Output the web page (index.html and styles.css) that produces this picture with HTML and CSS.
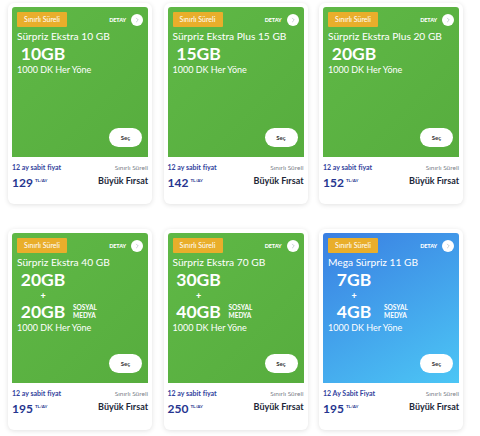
FILE: index.html
```html
<!DOCTYPE html>
<html lang="tr">
<head>
  <meta charset="UTF-8" />
  <title>Paketler</title>
  <link rel="stylesheet" href="styles.css">
</head>
<body>

  <div class="packages">

    <!-- Sürpriz Ekstra 10 GB -->
    <div class="card">
      <div class="pack green">
        <div class="pack-top">
          <span class="badge">Sınırlı Süreli</span>
          <span class="detail">DETAY <span class="detail-dot"><svg viewBox="0 0 12 12"><path d="M5 3.5 L7.5 6 L5 8.5" /></svg></span></span>
        </div>
        <div class="name">Sürpriz Ekstra 10 GB</div>
        <div class="amount">10GB</div>
        <div class="minutes">1000 DK Her Yöne</div>
        <div class="select"><button class="btn-sec">Seç</button></div>
      </div>
      <div class="info">
        <div>
          <div class="fixed">12 ay sabit fiyat</div>
          <div class="price">129<span class="unit">TL/AY</span></div>
        </div>
        <div class="info-right">
          <div class="limited">Sınırlı Süreli</div>
          <div class="deal">Büyük Fırsat</div>
        </div>
      </div>
    </div>

    <!-- Sürpriz Ekstra Plus 15 GB -->
    <div class="card">
      <div class="pack green">
        <div class="pack-top">
          <span class="badge">Sınırlı Süreli</span>
          <span class="detail">DETAY <span class="detail-dot"><svg viewBox="0 0 12 12"><path d="M5 3.5 L7.5 6 L5 8.5" /></svg></span></span>
        </div>
        <div class="name">Sürpriz Ekstra Plus 15 GB</div>
        <div class="amount">15GB</div>
        <div class="minutes">1000 DK Her Yöne</div>
        <div class="select"><button class="btn-sec">Seç</button></div>
      </div>
      <div class="info">
        <div>
          <div class="fixed">12 ay sabit fiyat</div>
          <div class="price">142<span class="unit">TL/AY</span></div>
        </div>
        <div class="info-right">
          <div class="limited">Sınırlı Süreli</div>
          <div class="deal">Büyük Fırsat</div>
        </div>
      </div>
    </div>

    <!-- Sürpriz Ekstra Plus 20 GB -->
    <div class="card">
      <div class="pack green">
        <div class="pack-top">
          <span class="badge">Sınırlı Süreli</span>
          <span class="detail">DETAY <span class="detail-dot"><svg viewBox="0 0 12 12"><path d="M5 3.5 L7.5 6 L5 8.5" /></svg></span></span>
        </div>
        <div class="name">Sürpriz Ekstra Plus 20 GB</div>
        <div class="amount">20GB</div>
        <div class="minutes">1000 DK Her Yöne</div>
        <div class="select"><button class="btn-sec">Seç</button></div>
      </div>
      <div class="info">
        <div>
          <div class="fixed">12 ay sabit fiyat</div>
          <div class="price">152<span class="unit">TL/AY</span></div>
        </div>
        <div class="info-right">
          <div class="limited">Sınırlı Süreli</div>
          <div class="deal">Büyük Fırsat</div>
        </div>
      </div>
    </div>

    <!-- Sürpriz Ekstra 40 GB -->
    <div class="card">
      <div class="pack green">
        <div class="pack-top">
          <span class="badge">Sınırlı Süreli</span>
          <span class="detail">DETAY <span class="detail-dot"><svg viewBox="0 0 12 12"><path d="M5 3.5 L7.5 6 L5 8.5" /></svg></span></span>
        </div>
        <div class="name">Sürpriz Ekstra 40 GB</div>
        <div class="amount">20GB</div>
        <div class="plus">+</div>
        <div class="extra">
          <span class="amount">20GB</span>
          <span class="social">SOSYAL<br>MEDYA</span>
        </div>
        <div class="minutes">1000 DK Her Yöne</div>
        <div class="select"><button class="btn-sec">Seç</button></div>
      </div>
      <div class="info">
        <div>
          <div class="fixed">12 ay sabit fiyat</div>
          <div class="price">195<span class="unit">TL/AY</span></div>
        </div>
        <div class="info-right">
          <div class="limited">Sınırlı Süreli</div>
          <div class="deal">Büyük Fırsat</div>
        </div>
      </div>
    </div>

    <!-- Sürpriz Ekstra 70 GB -->
    <div class="card">
      <div class="pack green">
        <div class="pack-top">
          <span class="badge">Sınırlı Süreli</span>
          <span class="detail">DETAY <span class="detail-dot"><svg viewBox="0 0 12 12"><path d="M5 3.5 L7.5 6 L5 8.5" /></svg></span></span>
        </div>
        <div class="name">Sürpriz Ekstra 70 GB</div>
        <div class="amount">30GB</div>
        <div class="plus">+</div>
        <div class="extra">
          <span class="amount">40GB</span>
          <span class="social">SOSYAL<br>MEDYA</span>
        </div>
        <div class="minutes">1000 DK Her Yöne</div>
        <div class="select"><button class="btn-sec">Seç</button></div>
      </div>
      <div class="info">
        <div>
          <div class="fixed">12 ay sabit fiyat</div>
          <div class="price">250<span class="unit">TL/AY</span></div>
        </div>
        <div class="info-right">
          <div class="limited">Sınırlı Süreli</div>
          <div class="deal">Büyük Fırsat</div>
        </div>
      </div>
    </div>

    <!-- Mega Sürpriz 11 GB -->
    <div class="card">
      <div class="pack blue">
        <div class="pack-top">
          <span class="badge">Sınırlı Süreli</span>
          <span class="detail">DETAY <span class="detail-dot"><svg viewBox="0 0 12 12"><path d="M5 3.5 L7.5 6 L5 8.5" /></svg></span></span>
        </div>
        <div class="name">Mega Sürpriz 11 GB</div>
        <div class="amount">7GB</div>
        <div class="plus">+</div>
        <div class="extra">
          <span class="amount">4GB</span>
          <span class="social">SOSYAL<br>MEDYA</span>
        </div>
        <div class="minutes">1000 DK Her Yöne</div>
        <div class="select"><button class="btn-sec">Seç</button></div>
      </div>
      <div class="info">
        <div>
          <div class="fixed">12 Ay Sabit Fiyat</div>
          <div class="price">195<span class="unit">TL/AY</span></div>
        </div>
        <div class="info-right">
          <div class="limited">Sınırlı Süreli</div>
          <div class="deal">Büyük Fırsat</div>
        </div>
      </div>
    </div>

  </div>

</body>
</html>
```

FILE: styles.css
```css
    * {
      box-sizing: border-box;
      margin: 0;
      padding: 0;
    }

    body {
      background: #ffffff;
      font-family: 'Lato', 'Noto Sans', sans-serif;
      width: 480px;
      height: 436px;
      overflow: hidden;
    }

    .packages {
      display: grid;
      grid-template-columns: repeat(3, 144px);
      column-gap: 11.5px;
      row-gap: 25px;
      padding: 3px 0 0 8px;
    }

    .card {
      background: #fff;
      border-radius: 6px;
      box-shadow: 0 1px 5px rgba(0, 0, 0, 0.12);
      height: 201px;
      padding: 4px;
    }

    .pack {
      position: relative;
      display: flex;
      flex-direction: column;
      height: 150px;
      padding: 5px 5px 10px 5px;
      border-radius: 3px 3px 0 0;
      color: #fff;
    }

    .green {
      background: linear-gradient(135deg, #5fb846, #57ad3e);
    }

    .blue {
      background: linear-gradient(150deg, #3a7fe2, #4cc6f5);
    }

    .pack-top {
      display: flex;
      justify-content: space-between;
      align-items: center;
    }

    .badge {
      background: #e9ae2b;
      color: #fff;
      font-size: 7px;
      width: 50px;
      height: 15px;
      line-height: 15px;
      text-align: center;
      border-radius: 1px;
    }

    .detail {
      display: flex;
      align-items: center;
      gap: 5px;
      font-size: 5.5px;
      font-weight: 900;
      letter-spacing: -0.1px;
    }

    .detail-dot {
      width: 12px;
      height: 12px;
      border-radius: 50%;
      background: #fff;
      display: flex;
      align-items: center;
      justify-content: center;
    }

    .detail-dot svg {
      width: 10px;
      height: 10px;
      fill: none;
      stroke: #c8d0d4;
      stroke-width: 1.2;
    }

    .name {
      font-size: 10.2px;
      line-height: 13px;
      margin-top: 3px;
    }

    .amount {
      display: block;
      width: 52px;
      text-align: center;
      font-size: 17.5px;
      font-weight: 700;
      line-height: 21px;
    }

    .plus {
      width: 52px;
      text-align: center;
      font-size: 9px;
      font-weight: 900;
      line-height: 11px;
    }

    .extra {
      display: flex;
      align-items: center;
      gap: 4px;
      height: 21px;
    }

    .social {
      font-size: 6.5px;
      font-weight: 700;
      line-height: 8px;
    }

    .minutes {
      font-size: 9px;
      line-height: 12px;
    }

    .select {
      margin-top: auto;
      display: flex;
      justify-content: flex-end;
      padding-right: 1px;
    }

    .btn-sec {
      position: relative;
      width: 33px;
      height: 19px;
      border: none;
      border-radius: 10px;
      background: #fff;
      color: #333;
      font-family: 'Lato', sans-serif;
      font-size: 6px;
      font-weight: 700;
    }

    .btn-sec::after {
      content: "";
      position: absolute;
      left: 12.5px;
      bottom: -15px;
      border-left: 4px solid transparent;
      border-right: 4px solid transparent;
      border-bottom: 5px solid #fff;
    }

    .info {
      display: flex;
      justify-content: space-between;
      padding-top: 6px;
    }

    .fixed {
      color: #33439d;
      font-size: 7px;
      font-weight: 700;
      line-height: 9px;
    }

    .price {
      color: #26358f;
      font-size: 12px;
      font-weight: 700;
      line-height: 15px;
      margin-top: 1px;
    }

    .unit {
      font-size: 4.5px;
      vertical-align: 5px;
      margin-left: 2px;
    }

    .info-right {
      text-align: right;
    }

    .limited {
      color: #7d818a;
      font-size: 6.5px;
      line-height: 9px;
    }

    .deal {
      color: #222838;
      font-size: 9px;
      font-weight: 700;
      line-height: 15px;
      margin-top: 1px;
    }
```
